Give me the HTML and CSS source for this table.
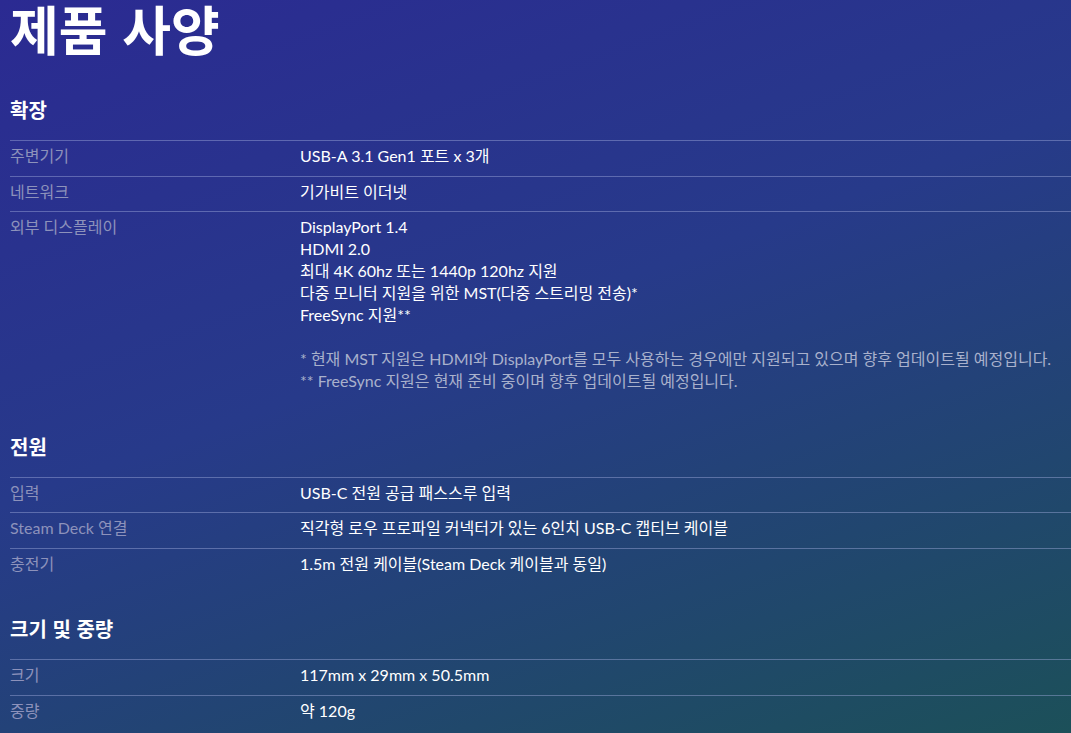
FILE: index.html
```html
<!DOCTYPE html>
<html lang="ko">

<head>
    <meta charset="UTF-8">
    <meta name="viewport" content="width=device-width, initial-scale=1.0">
    <title>제품 사양</title>
    <link rel="stylesheet" href="styles.css">
</head>

<body>
    <div class="specs">
        <h1 class="specs-title">제품 사양</h1>

        <div class="spec-group">
            <h2 class="group-title">확장</h2>
            <div class="spec-row">
                <div class="spec-label">주변기기</div>
                <div class="spec-value">USB-A 3.1 Gen1 포트 x 3개</div>
            </div>
            <div class="spec-row">
                <div class="spec-label">네트워크</div>
                <div class="spec-value">기가비트 이더넷</div>
            </div>
            <div class="spec-row">
                <div class="spec-label">외부 디스플레이</div>
                <div class="spec-value">
                    DisplayPort 1.4<br>
                    HDMI 2.0<br>
                    최대 4K 60hz 또는 1440p 120hz 지원<br>
                    다중 모니터 지원을 위한 MST(다중 스트리밍 전송)*<br>
                    FreeSync 지원**<br>
                    <br>
                    <span class="note">* 현재 MST 지원은 HDMI와 DisplayPort를 모두 사용하는 경우에만 지원되고 있으며 향후 업데이트될 예정입니다.</span><br>
                    <span class="note">** FreeSync 지원은 현재 준비 중이며 향후 업데이트될 예정입니다.</span>
                </div>
            </div>
        </div>

        <div class="spec-group">
            <h2 class="group-title">전원</h2>
            <div class="spec-row">
                <div class="spec-label">입력</div>
                <div class="spec-value">USB-C 전원 공급 패스스루 입력</div>
            </div>
            <div class="spec-row">
                <div class="spec-label">Steam Deck 연결</div>
                <div class="spec-value">직각형 로우 프로파일 커넥터가 있는 6인치 USB-C 캡티브 케이블</div>
            </div>
            <div class="spec-row">
                <div class="spec-label">충전기</div>
                <div class="spec-value">1.5m 전원 케이블(Steam Deck 케이블과 동일)</div>
            </div>
        </div>

        <div class="spec-group">
            <h2 class="group-title">크기 및 중량</h2>
            <div class="spec-row">
                <div class="spec-label">크기</div>
                <div class="spec-value">117mm x 29mm x 50.5mm</div>
            </div>
            <div class="spec-row">
                <div class="spec-label">중량</div>
                <div class="spec-value">약 120g</div>
            </div>
        </div>
    </div>
</body>

</html>
```

FILE: styles.css
```css
* {
    margin: 0;
    padding: 0;
    box-sizing: border-box;
}

html,
body {
    height: 100%;
}

body {
    background: linear-gradient(160deg, #2b2a92 0%, #273a8a 45%, #1c5059 100%);
    color: #ffffff;
    font-family: "Lato", "Noto Sans CJK KR", sans-serif;
    overflow: hidden;
}

.specs {
    padding-left: 10px;
}

.specs-title {
    font-family: "Noto Sans CJK KR", sans-serif;
    font-size: 53px;
    line-height: 56px;
    font-weight: 700;
}

.spec-group {
    margin-top: 31px;
}

.spec-group:first-of-type {
    margin-top: 39px;
}

.group-title {
    font-family: "Noto Sans CJK KR", sans-serif;
    font-size: 20px;
    line-height: 30px;
    font-weight: 700;
    margin-bottom: 15px;
}

.spec-row {
    display: flex;
    border-top: 1px solid rgba(160, 170, 220, 0.45);
    padding: 4px 0 8.5px;
    font-size: 16px;
    line-height: 22px;
}

.spec-label {
    width: 290px;
    flex-shrink: 0;
    color: #8d92bb;
}

.spec-value {
    color: #ffffff;
}

.note {
    color: #a9b1cc;
}
```
